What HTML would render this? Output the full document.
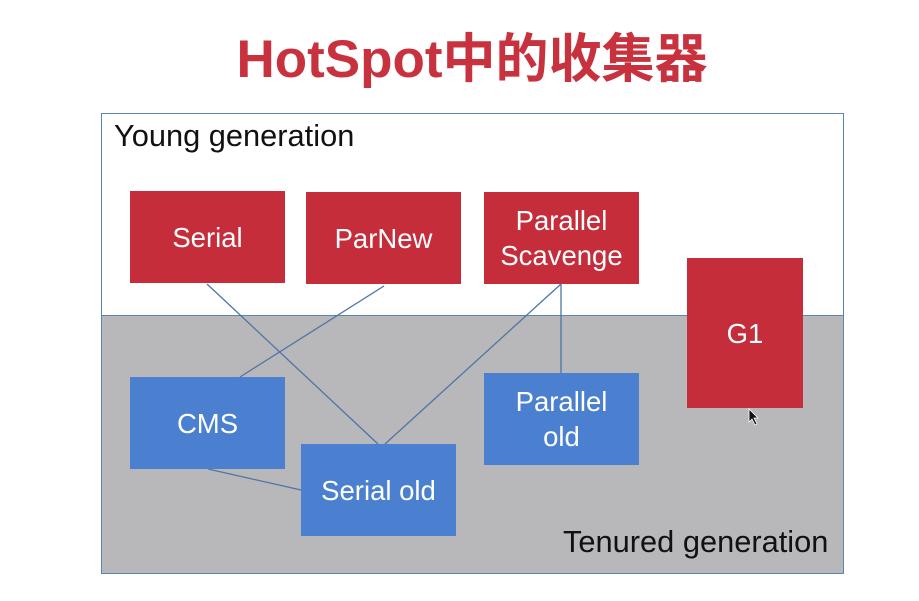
<!DOCTYPE html>
<html><head><meta charset="utf-8"><style>
body{margin:0;width:919px;height:601px;background:#fff;position:relative;overflow:hidden;font-family:"Liberation Sans","Noto Sans CJK SC",sans-serif}
.t{position:absolute;left:0;width:944px;top:27px;text-align:center;font-size:53px;font-weight:bold;color:#c8323e;line-height:66px}
.b{position:absolute;color:#fff;font-size:27.5px;display:flex;align-items:center;justify-content:center;text-align:center;line-height:35px}
.r{background:#c52d3b}.u{background:#4a80cf}
.l{position:absolute;font-size:30.8px;color:#111}
</style></head><body>
<div class="t">HotSpot中的收集器</div>
<div style="position:absolute;left:101px;top:315px;width:742px;height:258px;background:#b8b7b9"></div>
<div style="position:absolute;left:101px;top:113px;width:741px;height:459px;border:1px solid #5b83b8"></div>
<div style="position:absolute;left:101px;top:315px;width:742px;height:1px;background:#5b83b8"></div>
<div class="l" style="left:114px;top:118px">Young generation</div>
<div class="l" style="left:563px;top:524px">Tenured generation</div>
<svg style="position:absolute;left:0;top:0" width="919" height="601"><g stroke="#4f74a8" stroke-width="1.3">
<line x1="207" y1="284" x2="378" y2="444"/><line x1="384" y1="286" x2="240" y2="377"/>
<line x1="561" y1="284" x2="385" y2="444"/><line x1="561" y1="284" x2="561" y2="373"/>
<line x1="208" y1="469" x2="301" y2="490"/></g></svg>
<div class="b r" style="left:130px;top:191px;width:155px;height:92px">Serial</div>
<div class="b r" style="left:306px;top:192px;width:155px;height:92px">ParNew</div>
<div class="b r" style="left:484px;top:192px;width:155px;height:92px">Parallel<br>Scavenge</div>
<div class="b r" style="left:687px;top:258px;width:116px;height:150px">G1</div>
<div class="b u" style="left:130px;top:377px;width:155px;height:92px">CMS</div>
<div class="b u" style="left:301px;top:444px;width:155px;height:92px">Serial old</div>
<div class="b u" style="left:484px;top:373px;width:155px;height:92px">Parallel<br>old</div>
<svg style="position:absolute;left:748px;top:408px" width="12" height="18"><path d="M1 1 L1 14 L4 11 L7 17 L9 16 L6 10 L10 10 Z" fill="#111" stroke="#fff" stroke-width="0.8"/></svg>
</body></html>
